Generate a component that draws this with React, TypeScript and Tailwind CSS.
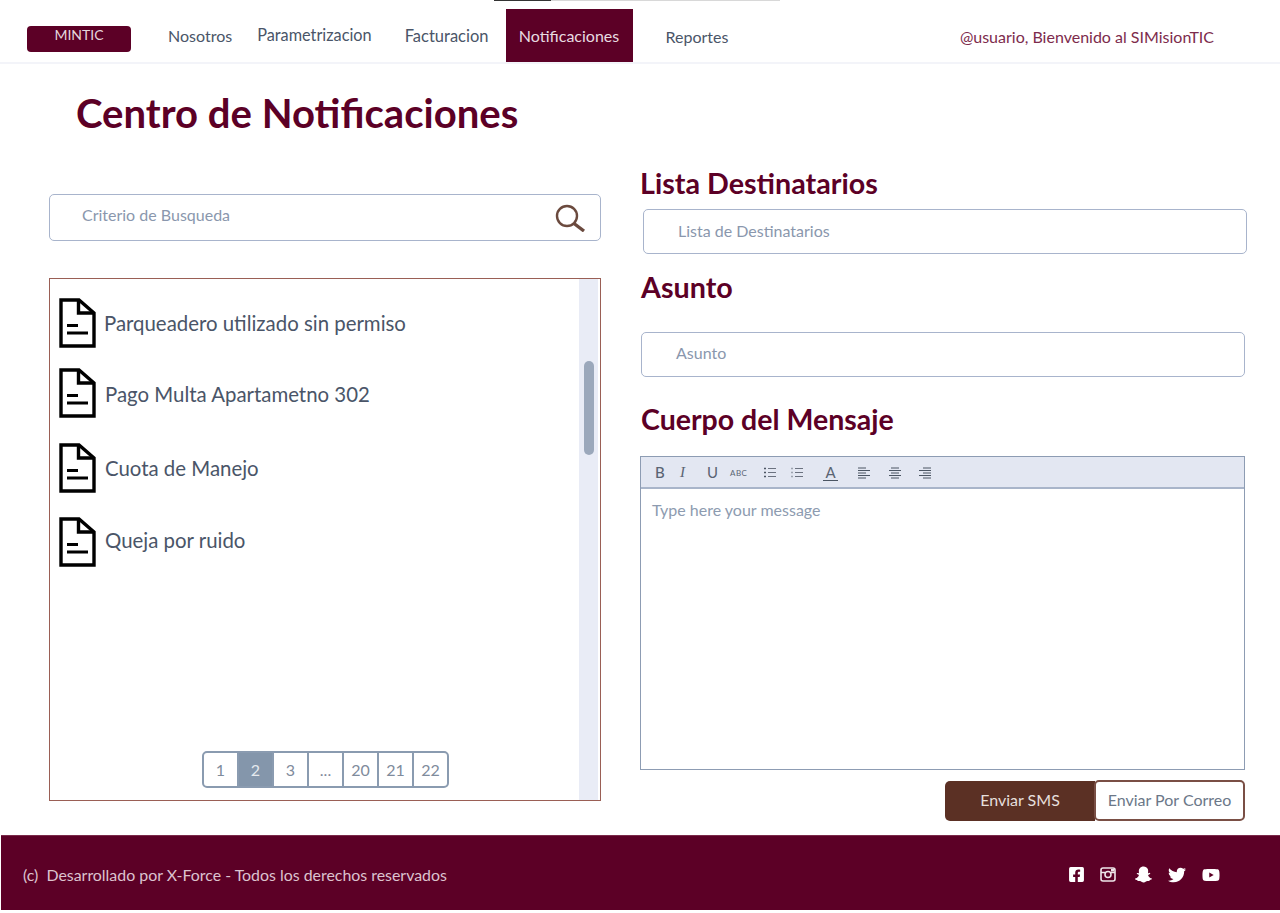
import React from 'react';
import { FaFacebookSquare, FaSnapchatGhost, FaTwitter, FaYoutube } from 'react-icons/fa';

const lato = { fontFamily: 'Lato, "Open Sans", sans-serif' };

const FileIcon: React.FC = () => (
  <svg width="37" height="50" viewBox="0 0 37 50" fill="none" stroke="#000" strokeWidth="3.4" className="shrink-0">
    <path d="M2 2H20L35 15V48H2Z" strokeLinejoin="miter" />
    <path d="M19.5 2V15H35" />
    <path d="M8 27.5H19M8 35H29" strokeWidth="3" />
  </svg>
);

const SearchIcon: React.FC = () => (
  <svg width="32" height="28" viewBox="0 0 32 28" fill="none" stroke="#6b4a3e" strokeWidth="2.4">
    <circle cx="13" cy="12" r="10" />
    <path d="M20 19.5L30 27" strokeWidth="3.4" />
  </svg>
);

const InstagramIcon: React.FC = () => (
  <svg width="16" height="15" viewBox="0 0 16 15" fill="none" stroke="#fff" className="opacity-90">
    <rect x="1" y="1" width="14" height="13" rx="2" strokeWidth="1.6" />
    <path d="M1 5.5H5M11 5.5H15" strokeWidth="1.4" />
    <circle cx="8" cy="7.5" r="3" strokeWidth="1.6" />
    <rect x="11" y="2" width="3" height="2.5" fill="#fff" stroke="none" />
  </svg>
);

const LinesIcon: React.FC<{ kind: 'ul' | 'ol' | 'left' | 'center' | 'right' }> = ({ kind }) => {
  if (kind === 'ul' || kind === 'ol') {
    const dots = kind === 'ul' ? '#4b5563' : '#9ca3af';
    return (
      <svg width="12" height="11" viewBox="0 0 12 11" fill="none" stroke="#6b7280">
        <path d="M4 1.5H12M4 5.5H12M4 9.5H12" />
        <path d="M0 1.5H2M0 5.5H2M0 9.5H2" stroke={dots} strokeWidth="1.6" />
      </svg>
    );
  }
  const d =
    kind === 'left'
      ? 'M0 1H8M0 3.5H12M0 6H8M0 8.5H12M0 11H8'
      : kind === 'center'
      ? 'M2 1H10M0 3.5H12M2 6H10M0 8.5H12M2 11H10'
      : 'M4 1H12M0 3.5H12M4 6H12M0 8.5H12M4 11H12';
  return (
    <svg width="12" height="12" viewBox="0 0 12 12" fill="none" stroke="#4b5563">
      <path d={d} />
    </svg>
  );
};

const items = [
  { label: 'Parqueadero utilizado sin permiso', top: 'mt-[19px]', nudge: '-mt-[1px]', gap: 'gap-[8px]' },
  { label: 'Pago Multa Apartametno 302', top: 'mt-[20px]', nudge: 'mt-[1px]', gap: 'gap-[9px]' },
  { label: 'Cuota de Manejo', top: 'mt-[25px]', nudge: '-mt-[1px]', gap: 'gap-[9px]' },
  { label: 'Queja por ruido', top: 'mt-[24px]', nudge: '-mt-[5px]', gap: 'gap-[9px]' },
];

const pages = ['1', '2', '3', '...', '20', '21', '22'];

export default function App() {
  return (
    <div className="w-[1280px] h-[913px] bg-white overflow-hidden text-[#4a5568]" style={lato}>
      {/* franja superior */}
      <div className="flex h-px pl-[494px]">
        <div className="w-[57px] bg-[#333]" />
        <div className="w-[229px] bg-[#d8d8d8]" />
      </div>

      <header className="flex h-[63px] border-b-2 border-[#f3f4f9] pl-[27px] pr-[66px]">
        <div className="mt-[25px] h-[26px] w-[104px] rounded-[4px] bg-[#5c0026] text-center text-[14px] leading-[17px] text-[#e5d5dc]">
          MINTIC
        </div>
        <nav className="ml-[37px] flex text-[16px] text-[#4a5568]">
          <a className="mt-[25px] leading-[20px]">Nosotros</a>
          <a className="ml-[25px] mt-[24px] text-[16.3px] leading-[20px]">Parametrizacion</a>
          <a className="ml-[33px] mt-[25px] text-[16.5px] leading-[20px]">Facturacion</a>
          <a className="ml-[17px] mt-[8px] h-[53px] w-[127px] bg-[#5c0026] pt-[17px] text-center leading-[20px] text-[#e8dce1]">
            Notificaciones
          </a>
          <a className="ml-[33px] mt-[26px] leading-[20px]">Reportes</a>
        </nav>
        <div className="ml-auto mt-[26px] text-[16px] leading-[20px] text-[#7d2b4c]">
          @usuario, Bienvenido al SIMisionTIC
        </div>
      </header>

      <h1 className="mt-[25px] pl-[76px] text-[40.1px] font-bold leading-[48px] text-[#5c0026]">
        Centro de Notificaciones
      </h1>

      <main className="flex items-start pl-[49px]">
        <section className="mt-[57px] w-[552px]">
          <div className="flex h-[47px] items-center justify-between rounded-[5px] border border-[#a8b4cc] pl-[32px] pr-[14px] text-[16px] text-[#8a97ad]">
            <span className="-mt-[6px]">Criterio de Busqueda</span>
            <SearchIcon />
          </div>

          <div className="mt-[37px] flex h-[523px] border border-[#9a5f55]">
            <div className="flex w-[529px] flex-col pl-[9px]">
              {items.map((item) => (
                <div key={item.label} className={`flex items-center ${item.gap} ${item.top}`}>
                  <FileIcon />
                  <span className={`${item.nudge} text-[20.4px] leading-[28px] text-[#4a5568]`}>{item.label}</span>
                </div>
              ))}
              <div className="ml-[143px] mt-auto mb-[12px] flex h-[37px] w-[247px] overflow-hidden rounded-[5px] border-2 border-[#8a9bb0] text-[16px] text-[#7f8b9c]">
                {pages.map((p, i) => (
                  <div
                    key={p}
                    className={`flex flex-1 items-center justify-center ${i > 0 ? 'border-l-2 border-[#8a9bb0]' : ''} ${
                      p === '2' ? 'bg-[#8496ab] text-[#e5e9ee]' : ''
                    }`}
                  >
                    {p}
                  </div>
                ))}
              </div>
            </div>
            <div className="w-[19px] bg-[#e9ecf6] pl-[5px] pt-[82px]">
              <div className="h-[94px] w-[10px] rounded-full bg-[#9ba8bb]" />
            </div>
          </div>
        </section>

        <section className="ml-[39px] mt-[28px] w-[607px]">
          <h2 className="text-[28.7px] font-bold leading-[36px] text-[#5c0026]">Lista Destinatarios</h2>
          <div className="ml-[3px] mt-[8px] flex h-[45px] w-[604px] items-center rounded-[5px] border border-[#a8b4cc] pb-[2px] pl-[34px] text-[16px] text-[#8a97ad]">
            Lista de Destinatarios
          </div>

          <h2 className="ml-px mt-[15px] text-[28.7px] font-bold leading-[36px] text-[#5c0026]">Asunto</h2>
          <div className="ml-px mt-[27px] flex h-[45px] w-[604px] items-center rounded-[5px] border border-[#a8b4cc] pb-[4px] pl-[34px] text-[16px] text-[#8a97ad]">
            Asunto
          </div>

          <h2 className="ml-px mt-[24px] text-[28.5px] font-bold leading-[36px] text-[#5c0026]">Cuerpo del Mensaje</h2>

          <div className="mt-[19px] h-[314px] w-[605px] border border-[#8d9cb3]">
            <div className="flex h-[32px] items-center border-b-2 border-[#a9b5ca] bg-[#e3e7f2] pl-[14px] pt-px text-[#5a6473]">
              <span className="w-[25px] text-[15px] font-medium">B</span>
              <span className="w-[27px] text-[15px] italic" style={{ fontFamily: '"Liberation Serif", serif' }}>
                I
              </span>
              <span className="w-[23px] text-[15px]">U</span>
              <span className="w-[34px] text-[8px] tracking-[0.5px]">ABC</span>
              <span className="w-[27px]">
                <LinesIcon kind="ul" />
              </span>
              <span className="w-[32px]">
                <LinesIcon kind="ol" />
              </span>
              <span className="w-[15px] border-b border-[#4b5563] text-center text-[15px] leading-[15px]">A</span>
              <span className="ml-[20px] w-[31px]">
                <LinesIcon kind="left" />
              </span>
              <span className="w-[30px]">
                <LinesIcon kind="center" />
              </span>
              <span>
                <LinesIcon kind="right" />
              </span>
            </div>
            <div className="pl-[11px] pt-[11px] text-[16px] leading-[20px] text-[#8d9bb0]">Type here your message</div>
          </div>

          <div className="mt-[11px] ml-[305px] flex w-[301px] text-[16px]">
            <button className="h-[40px] w-[150px] rounded-l-[5px] bg-[#5b3024] pb-[2px] text-center text-[#e6dfdc]">
              Enviar SMS
            </button>
            <button className="-ml-px h-[41px] w-[151px] -translate-y-px rounded-[5px] border-2 border-[#7a4f45] bg-white pb-[1px] text-center text-[#6b7788]">
              Enviar Por Correo
            </button>
          </div>
        </section>
      </main>

      <footer className="ml-px mt-[13px] flex h-[75px] items-center justify-between border-t border-[#7a2a4a] bg-[#5c0026] pl-[22px] pr-[60px] pt-[3px] text-[15.9px] text-[#dcc3cf]">
        <span>(c)&nbsp; Desarrollado por X-Force - Todos los derechos reservados</span>
        <div className="flex items-center text-[17px] text-white">
          <FaFacebookSquare className="mr-[15px]" />
          <span className="mr-[19px]">
            <InstagramIcon />
          </span>
          <FaSnapchatGhost className="mr-[16px]" />
          <FaTwitter className="mr-[16px] text-[18px]" />
          <FaYoutube className="text-[18px]" />
        </div>
      </footer>
    </div>
  );
}
